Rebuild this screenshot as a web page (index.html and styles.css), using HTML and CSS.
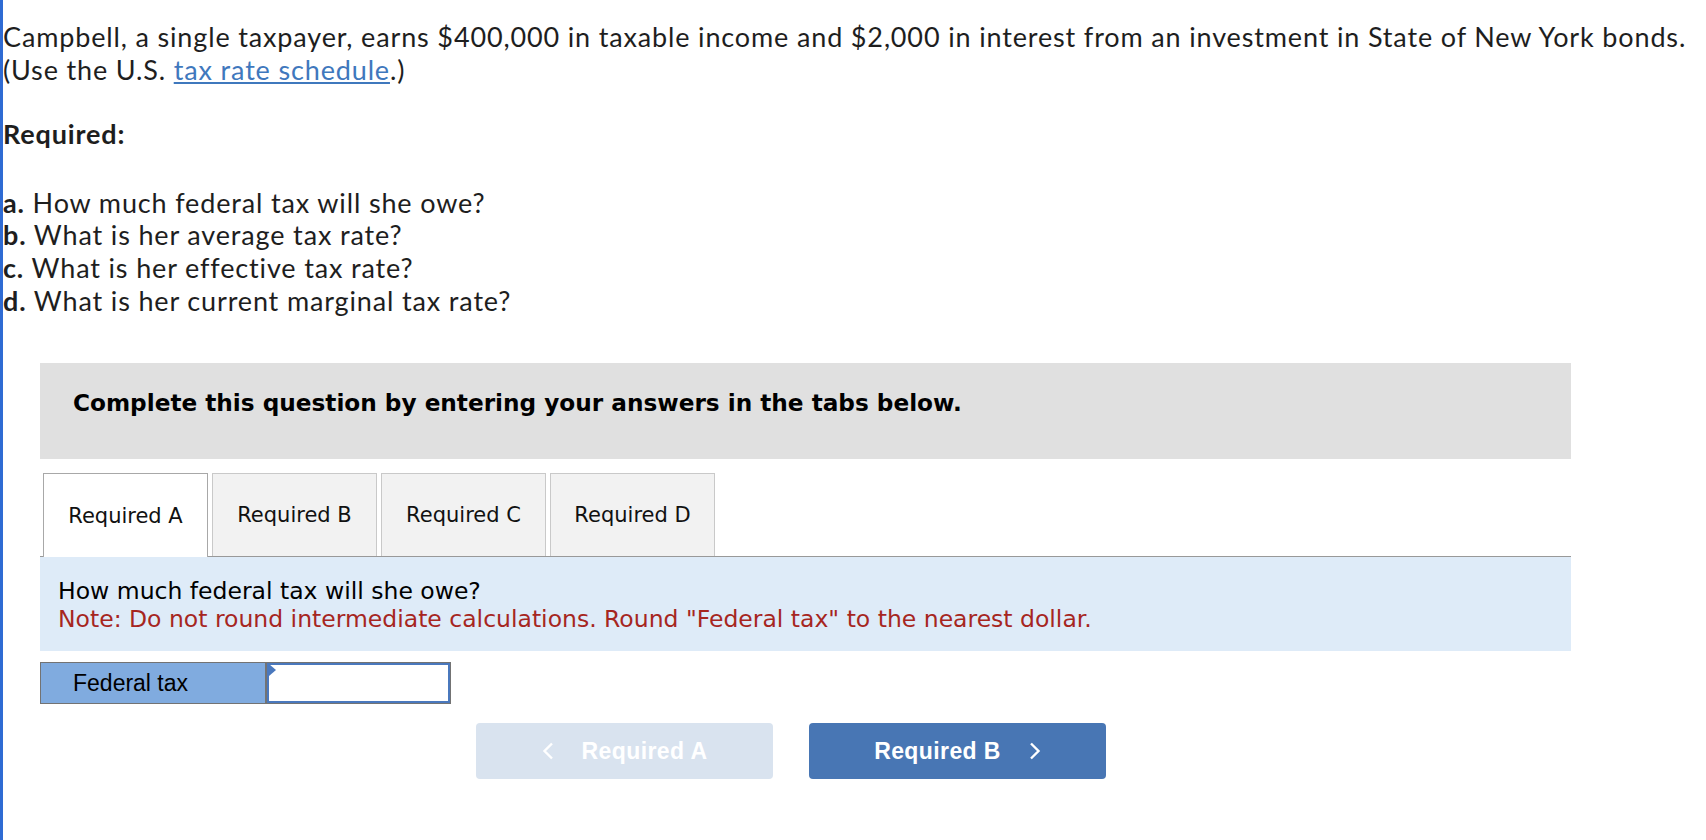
FILE: index.html
```html
<!DOCTYPE html>
<html lang="en">
<head>
  <meta charset="UTF-8">
  <meta name="viewport" content="width=device-width, initial-scale=1.0">
  <title>Federal Tax Question</title>
  <link rel="stylesheet" href="styles.css">
</head>
<body>
  <div class="page">
    <div class="question">
      <p class="intro">
        Campbell, a single taxpayer, earns $400,000 in taxable income and $2,000 in interest from an investment in State of New York bonds.<br>
        (Use the U.S. <a href="#">tax rate schedule</a>.)
      </p>

      <p class="required">Required:</p>

      <ul class="parts">
        <li><strong>a.</strong> How much federal tax will she owe?</li>
        <li><strong>b.</strong> What is her average tax rate?</li>
        <li><strong>c.</strong> What is her effective tax rate?</li>
        <li><strong>d.</strong> What is her current marginal tax rate?</li>
      </ul>
    </div>

    <div class="answer-area">
      <div class="instructions">Complete this question by entering your answers in the tabs below.</div>

      <div class="tabs">
        <button class="tab active">Required A</button>
        <button class="tab">Required B</button>
        <button class="tab">Required C</button>
        <button class="tab">Required D</button>
      </div>

      <div class="tab-panel">
        <p>How much federal tax will she owe?</p>
        <p class="note">Note: Do not round intermediate calculations. Round "Federal tax" to the nearest dollar.</p>
      </div>

      <div class="answer-row">
        <div class="answer-label">Federal tax</div>
        <div class="answer-cell">
          <input type="text" id="federalTax">
        </div>
      </div>

      <div class="nav">
        <button class="nav-btn prev" disabled>
          <svg width="12" height="18" viewBox="0 0 12 18"><polyline points="10,1.5 2.5,9 10,16.5" fill="none" stroke="currentColor" stroke-width="2.4"/></svg>
          <span>Required A</span>
        </button>
        <button class="nav-btn next">
          <span>Required B</span>
          <svg width="12" height="18" viewBox="0 0 12 18"><polyline points="2,1.5 9.5,9 2,16.5" fill="none" stroke="currentColor" stroke-width="2.4"/></svg>
        </button>
      </div>
    </div>
  </div>
</body>
</html>
```

FILE: styles.css
```css
* {
  margin: 0;
  padding: 0;
  box-sizing: border-box;
}

body {
  background-color: #fff;
  color: #1e1e1e;
}

.page {
  min-height: 100vh;
  border-left: 3px solid #2f6bd3;
}

.question {
  font-family: Lato, "Liberation Sans", sans-serif;
  font-size: 27px;
  letter-spacing: 0.85px;
  line-height: 32.5px;
  padding-top: 21px;
}

.intro a {
  color: #3f78bd;
  text-decoration: underline;
}

.required {
  font-weight: bold;
  margin-top: 32px;
}

.parts {
  list-style: none;
  margin-top: 36px;
  line-height: 32.7px;
}

.parts strong {
  font-weight: bold;
}

.answer-area {
  margin-top: 46px;
  margin-left: 37px;
  width: 1531px;
  font-family: Verdana, "DejaVu Sans", sans-serif;
  color: #000;
}

.instructions {
  background-color: #e0e0e0;
  font-weight: bold;
  font-size: 23.2px;
  padding: 26px 33px 43px;
}

.tabs {
  display: flex;
  gap: 4px;
  margin-top: 14px;
  padding-left: 3px;
  border-bottom: 1px solid #999;
}

.tab {
  width: 165px;
  height: 83px;
  font-family: inherit;
  font-size: 21px;
  color: #111;
  background-color: #f2f2f2;
  border: 1px solid #c9c9c9;
  border-bottom: none;
  cursor: pointer;
}

.tab.active {
  background-color: #fff;
  border-color: #a8a8a8;
  height: 84px;
  margin-bottom: -1px;
}

.tab-panel {
  background-color: #deebf8;
  font-size: 23.5px;
  line-height: 28px;
  padding: 20px 18px 18px;
}

.tab-panel .note {
  color: #a6261f;
}

.answer-row {
  display: flex;
  margin-top: 11px;
  height: 42px;
  width: 411px;
  border: 1px solid #737373;
}

.answer-label {
  width: 226px;
  background-color: #80abdf;
  font-family: "Liberation Sans", Arial, sans-serif;
  font-size: 23px;
  padding-left: 32px;
  display: flex;
  align-items: center;
  border-right: 2px solid #737373;
}

.answer-cell {
  position: relative;
  flex: 1;
}

.answer-cell::before {
  content: "";
  position: absolute;
  left: 2px;
  top: 1px;
  border-top: 6px solid transparent;
  border-bottom: 6px solid transparent;
  border-left: 7px solid #4a78bd;
}

.answer-cell input {
  width: 100%;
  height: 100%;
  border: 2px solid #4a78bd;
  outline: none;
  font-size: 20px;
  padding: 0 8px;
}

.nav {
  display: flex;
  justify-content: center;
  gap: 36px;
  margin-top: 19px;
  padding-right: 29px;
}

.nav-btn {
  display: flex;
  align-items: center;
  justify-content: center;
  gap: 28px;
  width: 297px;
  height: 56px;
  border: none;
  border-radius: 4px;
  color: #fff;
  font-family: "Liberation Sans", Arial, sans-serif;
  font-weight: bold;
  font-size: 23px;
  letter-spacing: 0.4px;
  cursor: pointer;
}

.nav-btn.prev {
  background-color: #d9e3ef;
  cursor: default;
}

.nav-btn.next {
  background-color: #4876b4;
}
```
